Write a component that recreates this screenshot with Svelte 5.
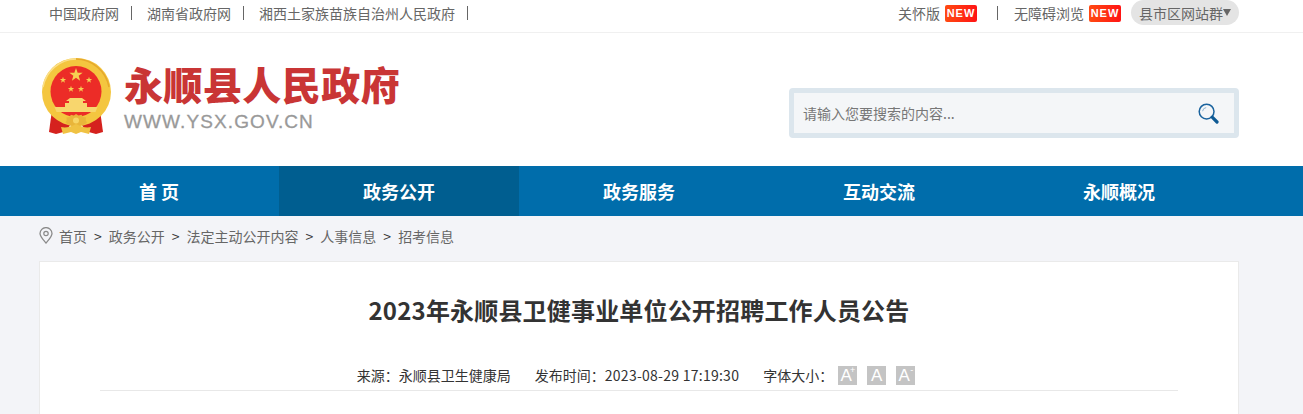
<script>
	const govLinks = ['中国政府网', '湖南省政府网', '湘西土家族苗族自治州人民政府'];
	const navItems = [
		{ label: '首 页' },
		{ label: '政务公开', active: true },
		{ label: '政务服务' },
		{ label: '互动交流' },
		{ label: '永顺概况' }
	];
	const crumbs = ['首页', '政务公开', '法定主动公开内容', '人事信息', '招考信息'];
	const smallStars = [
		[24, 22], [50, 22], [32, 31], [42, 31]
	];
	function star(cx, cy, r) {
		let pts = [];
		for (let i = 0; i < 10; i++) {
			const rad = i % 2 ? r * 0.4 : r;
			const a = -Math.PI / 2 + (i * Math.PI) / 5;
			pts.push(`${(cx + rad * Math.cos(a)).toFixed(2)},${(cy + rad * Math.sin(a)).toFixed(2)}`);
		}
		return pts.join(' ');
	}
</script>

<div class="page">
	<div class="topbar">
		<div class="wrap topbar-in">
			<ul class="gov-links">
				{#each govLinks as link}
					<li>{link}</li>
				{/each}
			</ul>
			<div class="tools">
				<span class="tool">关怀版<b class="new">NEW</b></span>
				<i class="tool-sep"></i>
				<span class="tool">无障碍浏览<b class="new">NEW</b></span>
				<span class="sites">县市区网站群<em></em></span>
			</div>
		</div>
	</div>

	<div class="head-band">
		<header class="wrap head">
			<div class="logo">
				<svg class="emblem" viewBox="0 0 74 78" width="74" height="78" aria-hidden="true">
					<path d="M13 52L10 74l7 2 11-3 4-8z" fill="#d5221e" />
					<path d="M61 52l3 22-7 2-11-3-4-8z" fill="#d5221e" />
					<ellipse cx="37.5" cy="34" rx="34.5" ry="34" fill="#f4c63f" />
					<path d="M37 1a34 34 0 0 1 33 28" fill="none" stroke="#e6a92c" stroke-width="1.5" />
					<path d="M4 29A34 34 0 0 1 37 1" fill="none" stroke="#fbe08a" stroke-width="1.5" />
					<circle cx="37" cy="33.5" r="25.5" fill="#ec2c27" />
					<polygon points={star(37, 17, 7)} fill="#f6cf52" />
					{#each smallStars as s}
						<polygon points={star(s[0], s[1], 3.3)} fill="#f6cf52" />
					{/each}
					<path d="M31 40h12l4 3h-3v2h4v4H26v-4h4v-2h-3z" fill="#f8d66d" />
					<path d="M15.5 49h43l-2 5h-39z" fill="#f8d66d" />
					<path d="M37 56l2.5 1.5 3-.8 1.5 2.2 3 .6-.4 2.8 1.4 2.2-2.6 2-9 3-7.4-3-2.6-2 1.4-2.2-.4-2.8 3-.6 1.5-2.2 3 .8z" fill="#e9b53a" />
					<circle cx="37" cy="62.5" r="3" fill="#f7d566" />
					<path d="M22 69c5 1 9 0 15-3 6 3 10 4 15 3l-2 7-8-2-5 2-5-2-8 2z" fill="#f0c243" />
				</svg>
				<div class="logo-text">
					<div class="logo-name">永顺县人民政府</div>
					<div class="logo-url">WWW.YSX.GOV.CN</div>
				</div>
			</div>
			<div class="search">
				<span class="search-hint">请输入您要搜索的内容...</span>
				<svg class="search-icon" viewBox="0 0 21 21" width="21" height="21" aria-hidden="true">
					<circle cx="8.6" cy="8.6" r="7.4" fill="none" stroke="#1a639e" stroke-width="1.5" />
					<path d="M4.6 8.2a4 4 0 0 1 3.6-3.6" fill="none" stroke="#8fb6d3" stroke-width="1" />
					<path d="M14.2 14.2l4.8 4.8" stroke="#0e5a94" stroke-width="3.2" stroke-linecap="round" />
				</svg>
			</div>
		</header>
	</div>

	<nav class="nav">
		<div class="wrap nav-in">
			{#each navItems as item}
				<a class="nav-item" class:active={item.active} href="#top">{item.label}</a>
			{/each}
		</div>
	</nav>

	<main class="wrap">
		<div class="crumbs">
			<svg class="pin" viewBox="0 0 14 17" width="14" height="17" aria-hidden="true">
				<path d="M7 16C3.5 12 1 9.7 1 6.6a6 6 0 0 1 12 0C13 9.7 10.5 12 7 16z" fill="none" stroke="#8a8a8a" stroke-width="1.3" />
				<circle cx="7" cy="6.5" r="2.2" fill="none" stroke="#8a8a8a" stroke-width="1.2" />
			</svg>
			{#each crumbs as crumb, i}
				{#if i > 0}<span class="gt">&gt;</span>{/if}
				<span>{crumb}</span>
			{/each}
		</div>

		<article class="card">
			<h1>2023年永顺县卫健事业单位公开招聘工作人员公告</h1>
			<div class="meta">
				<span>来源：永顺县卫生健康局</span>
				<span>发布时间：<span class="time">2023-08-29 17:19:30</span></span>
				<span class="sizes">
					字体大小：
					<b class="up">A<sup>+</sup></b>
					<b>A</b>
					<b class="up">A<sup>-</sup></b>
				</span>
			</div>
		</article>
	</main>
</div>

<style>
	:global(body) {
		margin: 0;
		overflow: hidden;
	}
	.page {
		height: 414px;
		overflow: hidden;
		background: #f3f4f8;
		font-family: "Noto Sans CJK SC", "Liberation Sans", sans-serif;
		font-size: 14px;
		color: #666;
	}
	.wrap {
		width: 1200px;
		margin-left: 39px;
	}

	.topbar {
		height: 32px;
		background: #fff;
		border-bottom: 1px solid #f0f0f0;
	}
	.topbar-in {
		display: flex;
		justify-content: space-between;
		height: 32px;
	}
	.gov-links {
		display: flex;
		list-style: none;
		margin: 0;
		padding: 0 0 0 10px;
	}
	.gov-links li {
		height: 14px;
		margin: 6px 15px 0 0;
		padding-right: 12px;
		border-right: 1px solid #666;
		line-height: 14px;
	}
	.tools {
		display: flex;
		align-items: flex-start;
		height: 25px;
	}
	.tool {
		display: flex;
		align-items: center;
		height: 25px;
		line-height: 25px;
		margin-top: 1px;
	}
	.new {
		width: 32px;
		height: 17px;
		margin-left: 5px;
		border-radius: 2px;
		background: linear-gradient(90deg, #ff4a12, #ff1414);
		color: #fff;
		font: bold 11px/17px "Liberation Sans", sans-serif;
		letter-spacing: 1px;
		text-align: center;
	}
	.tool-sep {
		width: 1px;
		height: 14px;
		margin: 6px 16px 0 20px;
		background: #666;
	}
	.sites {
		display: flex;
		height: 25px;
		margin-left: 10px;
		padding: 0 8px;
		border-radius: 13px;
		background: #e4e4e4;
		line-height: 26px;
	}
	.sites em {
		width: 0;
		height: 0;
		margin-top: 9px;
		border: 4px solid transparent;
		border-top: 7px solid #666;
		border-bottom: 0;
	}

	.head-band {
		height: 133px;
		background: #fff;
	}
	.head {
		display: flex;
		justify-content: space-between;
	}
	.logo {
		display: flex;
		padding-top: 25px;
	}
	.emblem {
		margin: 0 11px 0 0;
	}
	.logo-name {
		margin-top: 3px;
		color: #c93535;
		font-size: 39px;
		font-weight: 900;
		line-height: 44px;
		white-space: nowrap;
		letter-spacing: 0.45px;
	}
	.logo-url {
		margin-top: 5px;
		color: #999;
		font: 19px/24px "Liberation Sans", sans-serif;
		-webkit-text-stroke: 0.3px #999;
		letter-spacing: 1.1px;
	}
	.search {
		display: flex;
		align-items: center;
		justify-content: space-between;
		box-sizing: border-box;
		width: 450px;
		height: 50px;
		margin-top: 55px;
		padding: 0 15px 0 9px;
		border: 5px solid #dce6ed;
		border-radius: 4px;
		background: #f4f6f8;
	}
	.search-hint {
		color: #777;
	}

	.nav {
		height: 50px;
		background: #006dab;
	}
	.nav-in {
		display: flex;
	}
	.nav-item {
		width: 240px;
		color: #fff;
		font-size: 18px;
		font-weight: 700;
		line-height: 50px;
		text-align: center;
		text-decoration: none;
	}
	.nav-item.active {
		background: #005e90;
	}

	.crumbs {
		display: flex;
		align-items: center;
		box-sizing: border-box;
		height: 45px;
		padding-bottom: 6px;
		color: #666;
	}
	.pin {
		margin-right: 6px;
	}
	.gt {
		margin: 0 7px;
		color: #333;
	}

	.card {
		height: 200px;
		box-sizing: border-box;
		border: 1px solid #eaeaea;
		background: #fff;
	}
	h1 {
		margin: 30px 0 0;
		color: #333;
		font-size: 24px;
		font-weight: 700;
		line-height: 36px;
		letter-spacing: 0.18px;
		text-align: center;
	}
	.meta {
		display: flex;
		justify-content: center;
		gap: 24px;
		margin: 34px 60px 0;
		padding-right: 6px;
		height: 28px;
		border-bottom: 1px solid #e8e8e8;
		color: #333;
		line-height: 26px;
	}
	.time {
		letter-spacing: 0.26px;
	}
	.sizes {
		display: flex;
		align-items: center;
		height: 26px;
	}
	.sizes b {
		position: relative;
		width: 19px;
		height: 19px;
		margin-left: 10px;
		background: #c4c4c4;
		color: #fff;
		font: 17px/20px "Liberation Sans", sans-serif;
		text-align: center;
	}
	.sizes b.up {
		text-indent: -3px;
	}
	.sizes b:first-of-type {
		margin-left: 5px;
	}
	.sizes sup {
		position: absolute;
		top: -3px;
		right: 2px;
		font-size: 9px;
		line-height: 14px;
		text-indent: 0;
	}
</style>
